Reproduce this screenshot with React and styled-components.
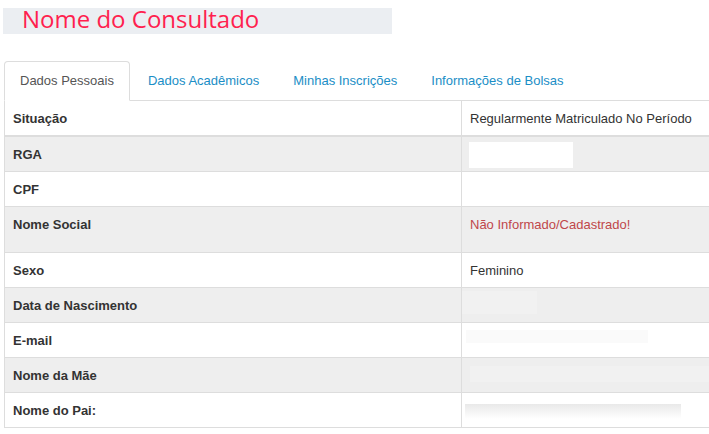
import styled, { createGlobalStyle } from 'styled-components';

const GlobalStyle = createGlobalStyle`
  body {
    margin: 0;
    background: #fff;
    overflow: hidden;
    font-family: "Liberation Sans", Arial, sans-serif;
    font-size: 13px;
    line-height: 18px;
    color: #333;
  }
`;

const Page = styled.div`
  padding-top: 8px;
  width: 740px;
`;

const Banner = styled.div`
  margin-left: 3px;
  width: 389px;
  height: 26px;
  background: #ebeef2;
  display: flex;
  align-items: center;
`;

const Title = styled.h1`
  margin: 0 0 0 19px;
  font-family: "Open Sans", "Noto Sans", sans-serif;
  font-weight: 400;
  font-size: 24px;
  line-height: 26px;
  color: #ff1f4f;
  position: relative;
  top: -2px;
`;

const Content = styled.div`
  margin: 27px 0 0 4px;
`;

const Tabs = styled.ul`
  display: flex;
  margin: 0;
  padding: 0;
  list-style: none;
  border-bottom: 1px solid #ddd;
`;

const Tab = styled.li`
  margin-bottom: -1px;
  margin-right: 2px;
  padding: 10px 15px;
  border: 1px solid ${p => (p.$active ? '#ddd' : 'transparent')};
  border-bottom-color: transparent;
  border-radius: 4px 4px 0 0;
  background: ${p => (p.$active ? '#fff' : 'transparent')};
  color: ${p => (p.$active ? '#555' : '#1b8ec6')};
  cursor: pointer;
`;

const Table = styled.table`
  width: 100%;
  border-collapse: collapse;
  border-left: 1px solid #ddd;
`;

const Row = styled.tr`
  background: ${p => (p.$striped ? '#eeeeee' : '#fff')};
  border-bottom: ${p => (p.$head ? '2px' : '1px')} solid #ddd;
`;

const Label = styled.th`
  width: 440px;
  padding: 9px 8px 7px;
  text-align: left;
  vertical-align: top;
  font-weight: 700;
  color: #333;
  border-right: 1px solid #ddd;
`;

const Value = styled.td`
  padding: 9px 8px ${p => (p.$tall ? '18px' : '7px')};
  vertical-align: top;
  color: ${p => (p.$danger ? '#c0474a' : '#333')};
`;

const Redacted = styled.span`
  display: block;
  width: ${p => p.$w}px;
  height: ${p => p.$h}px;
  margin: ${p => p.$m};
  background: ${p => p.$bg};
`;

const rows = [
  { label: 'Situação', value: 'Regularmente Matriculado No Período', head: true },
  { label: 'RGA', blur: { w: 104, h: 26, m: '-4px 0 -4px -1px', bg: '#fff' } },
  { label: 'CPF', value: '' },
  { label: 'Nome Social', value: 'Não Informado/Cadastrado!', danger: true, tall: true },
  { label: 'Sexo', value: 'Feminino' },
  { label: 'Data de Nascimento', blur: { w: 75, h: 23, m: '-6px 0 1px -8px', bg: '#f1f1f1' } },
  { label: 'E-mail', blur: { w: 182, h: 13, m: '-2px 0 7px -4px', bg: '#fafafa' } },
  { label: 'Nome da Mãe', blur: { w: 240, h: 16, m: '-1px 0 3px 0', bg: '#f1f1f1' } },
  {
    label: 'Nome do Pai:',
    blur: { w: 216, h: 15, m: '2px 0 1px -5px', bg: 'linear-gradient(#e9e9e9, #fff)' }
  }
];

const App = () => {
  const tabs = ['Dados Pessoais', 'Dados Acadêmicos', 'Minhas Inscrições', 'Informações de Bolsas'];

  return (
    <Page>
      <GlobalStyle />
      <Banner>
        <Title>Nome do Consultado</Title>
      </Banner>
      <Content>
        <Tabs>
          {tabs.map((tab, i) => (
            <Tab key={tab} $active={i === 0}>{tab}</Tab>
          ))}
        </Tabs>
        <Table>
          <tbody>
            {rows.map((row, i) => (
              <Row key={row.label} $striped={i % 2 === 1} $head={row.head}>
                <Label>{row.label}</Label>
                <Value $danger={row.danger} $tall={row.tall}>
                  {row.blur ? (
                    <Redacted $w={row.blur.w} $h={row.blur.h} $m={row.blur.m} $bg={row.blur.bg} />
                  ) : (
                    row.value || '\u00a0'
                  )}
                </Value>
              </Row>
            ))}
          </tbody>
        </Table>
      </Content>
    </Page>
  );
};

export default App;
